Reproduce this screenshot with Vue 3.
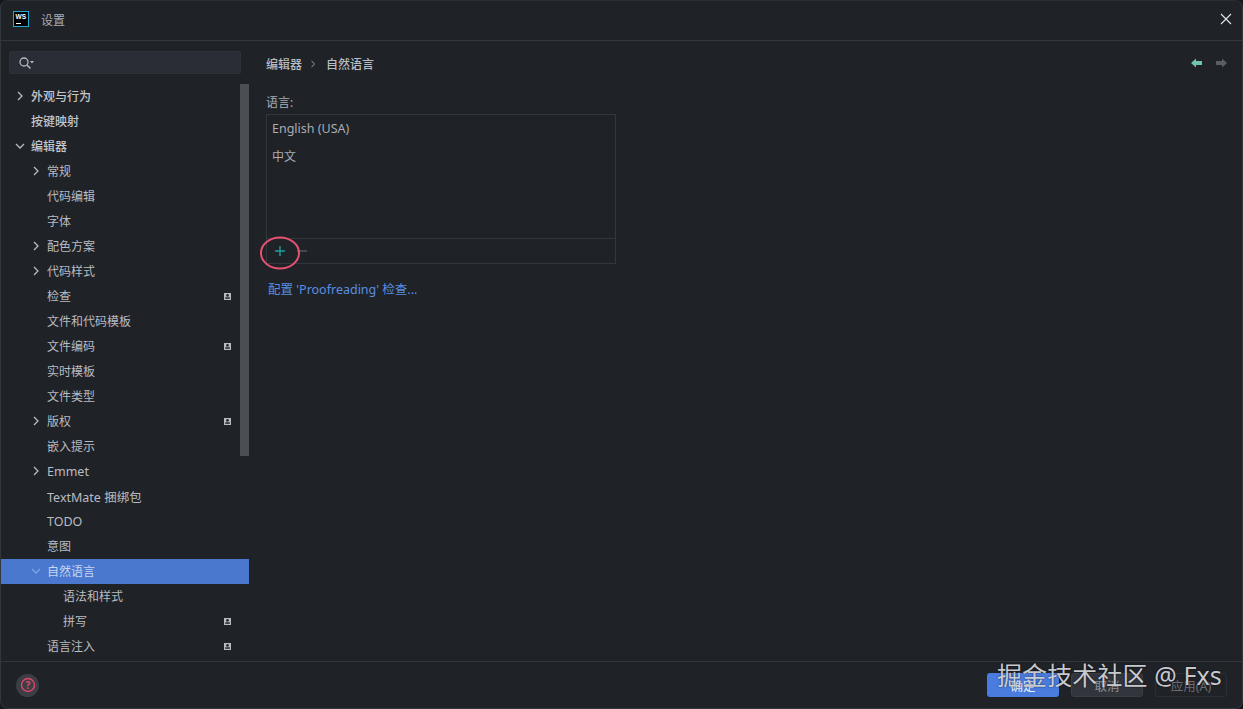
<script setup>
const rows = [
  { t: '外观与行为', level: 0, arrow: 'right', bold: true },
  { t: '按键映射', level: 0, bold: true },
  { t: '编辑器', level: 0, arrow: 'down', bold: true },
  { t: '常规', level: 1, arrow: 'right' },
  { t: '代码编辑', level: 1 },
  { t: '字体', level: 1 },
  { t: '配色方案', level: 1, arrow: 'right' },
  { t: '代码样式', level: 1, arrow: 'right' },
  { t: '检查', level: 1, badge: true },
  { t: '文件和代码模板', level: 1 },
  { t: '文件编码', level: 1, badge: true },
  { t: '实时模板', level: 1 },
  { t: '文件类型', level: 1 },
  { t: '版权', level: 1, arrow: 'right', badge: true },
  { t: '嵌入提示', level: 1 },
  { t: 'Emmet', level: 1, arrow: 'right', latin: true },
  { t: 'TextMate 捆绑包', level: 1, latin: true },
  { t: 'TODO', level: 1, latin: true },
  { t: '意图', level: 1 },
  { t: '自然语言', level: 1, arrow: 'down', selected: true },
  { t: '语法和样式', level: 2 },
  { t: '拼写', level: 2, badge: true },
  { t: '语言注入', level: 1, badge: true },
]
</script>

<template>
  <div class="window">
    <header class="titlebar">
      <svg class="logo" width="16" height="16" viewBox="0 0 16 16">
        <rect x="0.5" y="0.5" width="15" height="15" fill="#000" stroke="#21a9d6" />
        <text x="2.5" y="8" class="logo-text">WS</text>
        <rect x="3" y="12" width="5" height="1" fill="#fff" />
      </svg>
      <span class="title">设置</span>
      <svg class="close" width="12" height="12" viewBox="0 0 12 12">
        <path d="M1 1 L11 11 M11 1 L1 11" stroke="#e4e6ea" stroke-width="1.1" fill="none" />
      </svg>
    </header>

    <div class="body">
      <aside class="sidebar">
        <div class="search">
          <svg width="18" height="14" viewBox="0 0 18 14">
            <circle cx="6" cy="6" r="4" fill="none" stroke="#b4b8bf" stroke-width="1.3" />
            <path d="M9 9 L12.5 12.5" stroke="#b4b8bf" stroke-width="1.5" />
            <path d="M12 5 H16 L14 7.5 Z" fill="#b4b8bf" />
          </svg>
        </div>
        <div class="tree">
          <div
            v-for="r in rows"
            :key="r.t"
            class="row"
            :class="[`level-${r.level}`, { selected: r.selected, bold: r.bold, latin: r.latin }]"
          >
            <svg v-if="r.arrow" class="arrow" width="10" height="10" viewBox="0 0 10 10">
              <path v-if="r.arrow === 'right'" d="M3 1 L7 5 L3 9" fill="none" stroke="currentColor" stroke-width="1.3" />
              <path v-else d="M1 3 L5 7 L9 3" fill="none" stroke="currentColor" stroke-width="1.3" />
            </svg>
            <span class="label">{{ r.t }}</span>
            <svg v-if="r.badge" class="badge" width="7" height="7" viewBox="0 0 7 7">
              <rect width="7" height="7" fill="#b8bbc0" />
              <circle cx="3.5" cy="2.4" r="1.3" fill="#23262c" />
              <rect x="1.2" y="4.3" width="4.6" height="1.5" fill="#23262c" />
            </svg>
          </div>
          <div class="scrollbar"></div>
        </div>
      </aside>

      <main class="content">
        <div class="crumbs">
          <span class="crumb">编辑器</span>
          <svg width="6" height="8" viewBox="0 0 6 8" class="crumb-sep">
            <path d="M1.5 0.8 L4.5 4 L1.5 7.2" fill="none" stroke="#9a9da4" stroke-width="1" />
          </svg>
          <span class="crumb">自然语言</span>
          <span class="nav">
            <svg width="11" height="10" viewBox="0 0 11 10"><path d="M0 5 L5 0.5 V3 H11 V7 H5 V9.5 Z" fill="#6fc3af" /></svg>
            <svg width="11" height="10" viewBox="0 0 11 10"><path d="M11 5 L6 0.5 V3 H0 V7 H6 V9.5 Z" fill="#5a5e63" /></svg>
          </span>
        </div>

        <div class="field-label">语言:</div>
        <div class="list">
          <div class="items">
            <div class="item">English (USA)</div>
            <div class="item cjk">中文</div>
          </div>
          <div class="toolbar">
            <svg width="10" height="10" viewBox="0 0 10 10"><path d="M5 0 V10 M0 5 H10" stroke="#1f9ea0" stroke-width="1.4" /></svg>
            <svg width="10" height="10" viewBox="0 0 10 10"><path d="M0 5 H10" stroke="#54575d" stroke-width="1.3" /></svg>
          </div>
          <svg class="ring" width="42" height="34" viewBox="0 0 42 34">
            <ellipse cx="21" cy="17" rx="19" ry="15.5" fill="none" stroke="#e5526f" stroke-width="2" />
          </svg>
        </div>
        <a class="link">配置 'Proofreading' 检查...</a>
      </main>
    </div>

    <footer class="footer">
      <div class="help">
        <svg width="16" height="16" viewBox="0 0 16 16">
          <circle cx="8" cy="8" r="6.5" fill="none" stroke="#e0466b" stroke-width="1.4" />
          <text x="8" y="11.5" text-anchor="middle" class="help-text">?</text>
        </svg>
      </div>
      <div class="buttons">
        <button class="btn primary">确定</button>
        <button class="btn secondary">取消</button>
        <button class="btn disabled">应用(A)</button>
      </div>
    </footer>

    <div class="watermark">掘金技术社区 @ Fxs</div>
  </div>
</template>

<style>
html, body { margin: 0; background: #15171b; }
</style>

<style scoped>
.window {
  position: relative;
  width: 1243px;
  height: 709px;
  box-sizing: border-box;
  background: #1f2227;
  border-radius: 8px;
  border: 1px solid #33363c;
  border-top-color: #2a2d33;
  font-family: "Noto Sans", "Noto Sans CJK SC", sans-serif;
  font-size: 12px;
  color: #b9bcc2;
  display: flex;
  flex-direction: column;
  overflow: hidden;
}
.titlebar {
  height: 40px;
  flex: none;
  box-sizing: border-box;
  border-bottom: 1px solid #34373d;
  display: flex;
  align-items: center;
  padding: 0 10px 3px 12px;
}
.logo-text { font: bold 6.5px "Liberation Sans", sans-serif; fill: #fff; }
.title { margin-left: 12px; padding-top: 2px; color: #a9acb2; }
.close { margin-left: auto; }
.body { flex: 1; display: flex; min-height: 0; }
.sidebar { width: 248px; flex: none; display: flex; flex-direction: column; overflow: hidden; }
.search {
  margin: 10px 8px 0 8px;
  height: 23px;
  box-sizing: border-box;
  background: #2a2d35;
  border: 1px solid #2e3138;
  border-radius: 2px;
  display: flex;
  align-items: center;
  padding-left: 8px;
}
.tree { position: relative; margin-top: 10px; }
.row {
  height: 25px;
  display: flex;
  align-items: center;
  position: relative;
  box-sizing: border-box;
  padding-bottom: 2px;
}
.row.latin { font-size: 12.5px; padding-bottom: 0; }
.row.bold .label { font-weight: 500; color: #c3c6cc; }
.level-0 .label { margin-left: 30px; }
.level-1 .label { margin-left: 46px; }
.level-2 .label { margin-left: 62px; }
.arrow { position: absolute; top: 7px; color: #b9bcc2; }
.level-0 .arrow { left: 14px; }
.level-1 .arrow { left: 30px; }
.selected { background: #4a78cf; width: 248px; }
.selected .label { color: #c8d6f0; }
.selected .arrow { color: #7ea5e6; }
.badge { position: absolute; left: 223px; top: 9px; }
.scrollbar {
  position: absolute;
  left: 239px;
  top: 0;
  width: 9px;
  height: 372px;
  background: #4b4e53;
}
.content { flex: 1; padding: 0 0 0 17px; min-width: 0; }
.crumbs {
  display: flex;
  align-items: center;
  height: 20px;
  margin-top: 13px;
  padding-right: 15px;
}
.crumb { font-weight: 500; color: #b9bcc2; }
.crumb-sep { margin: 0 10px 0 8px; }
.nav { margin-left: auto; margin-top: -2px; display: flex; gap: 14px; }
.field-label { margin-top: 20px; height: 18px; line-height: 18px; color: #a9acb2; }
.list {
  position: relative;
  width: 350px;
  height: 150px;
  margin-top: 2px;
  box-sizing: border-box;
  border: 1px solid #33363c;
  display: flex;
  flex-direction: column;
}
.items { flex: 1; border-bottom: 1px solid #33363c; padding: 0 5px; }
.item { height: 27px; line-height: 27px; color: #a9acb2; font-size: 12.5px; }
.item.cjk { font-size: 12px; padding-top: 1px; box-sizing: border-box; }
.toolbar { height: 24px; flex: none; display: flex; align-items: center; gap: 12px; padding-left: 8px; }
.ring { position: absolute; left: -8px; top: 121px; }
.link { display: block; margin: 17px 0 0 2px; line-height: 18px; color: #5a8fe0; font-size: 12.5px; }
.footer {
  height: 47px;
  flex: none;
  box-sizing: border-box;
  border-top: 1px solid #33363c;
  display: flex;
  align-items: center;
  padding: 0 15px;
}
.help {
  width: 23px;
  height: 23px;
  border-radius: 50%;
  background: #3b3e45;
  display: flex;
  align-items: center;
  justify-content: center;
}
.help-text { font: bold 10px "Noto Sans", sans-serif; fill: #e0466b; }
.buttons { margin-left: auto; display: flex; gap: 12px; }
.btn {
  width: 72px;
  height: 24px;
  box-sizing: border-box;
  border-radius: 3px;
  font: 12.5px "Noto Sans", "Noto Sans CJK SC", sans-serif;
  padding: 0;
}
.primary { background: #4a7ce0; border: none; color: #e8eefa; }
.secondary { background: #32353c; border: 1px solid #3b3e45; color: #8d9096; }
.disabled { background: transparent; border: 1px solid #2c2f35; color: #6a6d73; }
.watermark {
  position: absolute;
  left: 996px;
  top: 656px;
  font-size: 25px;
  line-height: 36px;
  letter-spacing: 0.1px;
  color: rgba(218, 220, 224, 0.92);
  text-shadow: 0 0 2px rgba(0, 0, 0, 0.7);
  white-space: nowrap;
  font-family: "Noto Sans", "Noto Sans CJK SC", sans-serif;
}
</style>
